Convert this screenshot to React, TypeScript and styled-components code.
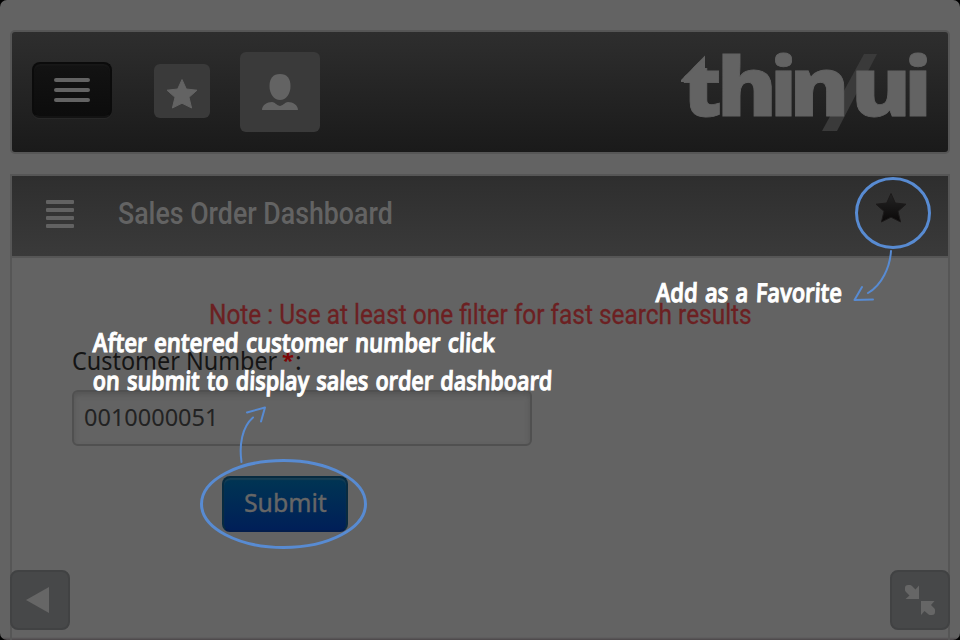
import React, { useLayoutEffect, useRef, useState } from 'react';
import styled, { createGlobalStyle } from 'styled-components';

const GlobalStyle = createGlobalStyle`
  * { box-sizing: border-box; }
  html, body { margin: 0; background: #000; overflow: hidden; }
`;

const Screen = styled.main`
  position: relative;
  display: flex;
  flex-direction: column;
  gap: 20px;
  width: 960px;
  height: 640px;
  padding: 30px 10px 0;
  overflow: hidden;
  border-radius: 7px;
  background: linear-gradient(#636363 0 637px, #4b4649 640px);
`;

const Toolbar = styled.header`
  display: flex;
  align-items: flex-start;
  flex: none;
  height: 124px;
  padding-left: 20px;
  border: 2px solid #565656;
  border-radius: 5px;
  background: linear-gradient(#2e2e2e, #1a1a1a);
`;

const MenuButton = styled.button`
  display: flex;
  flex-direction: column;
  align-items: center;
  justify-content: center;
  gap: 6px;
  width: 80px;
  height: 56px;
  margin: 30px 0 0;
  padding: 0;
  border: 2px solid #0b0b0b;
  border-bottom-color: #131313;
  border-radius: 8px;
  background: linear-gradient(#131313, #0c0c0c);
  box-shadow: inset 0 2px 1px #171717, 0 1px 1px #292929;
`;

const MenuBar = styled.span`
  width: 36px;
  height: 4px;
  border-radius: 2px;
  background: #636363;
`;

const Tile = styled.button<{ $w: number; $h: number; $top: number; $left: number }>`
  display: grid;
  place-items: center;
  width: ${p => p.$w}px;
  height: ${p => p.$h}px;
  margin: ${p => p.$top}px 0 0 ${p => p.$left}px;
  padding: 0;
  border: 0;
  border-radius: 6px;
  background: #3a3a3a;
`;

const Logo = styled.svg`
  width: 260px;
  height: 118px;
  margin: 0 12px 0 auto;
  overflow: visible;
  font-family: 'Open Sans', sans-serif;
  font-weight: 800;
  font-size: 81px;
  fill: #636363;
`;

const Panel = styled.section`
  display: flex;
  flex-direction: column;
  flex: 1;
  border: 2px solid #565656;
  border-bottom: 0;
`;

const PanelHeader = styled.div`
  display: flex;
  align-items: flex-start;
  flex: none;
  height: 82px;
  padding: 0 41px 0 34px;
  border-bottom: 2px solid #565656;
  background: linear-gradient(#2e2e2e, #3a3a3a);
`;

const ListLines = styled.span`
  display: flex;
  flex-direction: column;
  gap: 4px;
  width: 28px;
  margin: 24px 44px 0 0;
`;

const ListLine = styled.i`
  height: 4px;
  border-radius: 1px;
  background: #626262;
`;

const HeaderStar = styled.span`
  margin: 16px 0 0 auto;
`;

const PanelBody = styled.form`
  display: flex;
  flex-direction: column;
  align-items: flex-start;
  padding: 39px 60px 0;
`;

const Note = styled.div`
  margin-left: 137px;
  height: 38px;
`;

const Label = styled.label`
  display: flex;
  height: 40px;
  padding-top: 10px;
`;

const Required = styled.span`
  width: 17px;
  padding-left: 5px;
  font: 700 22px/28px 'Noto Sans', sans-serif;
  color: #7d0606;
`;

const Colon = styled.span`
  padding-left: 1px;
  font: 25px/30px 'Noto Sans', sans-serif;
  color: #141414;
`;

const Field = styled.div`
  display: flex;
  width: 460px;
  height: 56px;
  margin-top: 15px;
  padding: 7px 0 0 10px;
  border: 2px solid #505050;
  border-radius: 6px;
  box-shadow: inset 0 3px 5px #555;
`;

const SubmitButton = styled.button`
  display: flex;
  width: 126px;
  height: 56px;
  margin: 30px 0 0 150px;
  padding: 6px 0 0 20px;
  border: 2px solid #082b40;
  border-bottom-color: #031d4c;
  border-radius: 8px;
  background: linear-gradient(#003553, #001f58);
  box-shadow: inset 0 2px 1px #173f55;
`;

const CornerButton = styled.button<{ $side: 'left' | 'right' }>`
  position: absolute;
  top: 570px;
  ${p => p.$side}: 10px;
  width: 60px;
  height: 60px;
  padding: 0;
  border: 2px solid #414243;
  border-radius: 8px;
  background: #474849;
`;

const Overlay = styled.div`
  position: absolute;
  inset: 0;
  pointer-events: none;
`;

const Marks = styled.svg`
  position: absolute;
  inset: 0;
  width: 960px;
  height: 640px;
  fill: none;
  stroke: #588bd2;
  stroke-linecap: round;
  stroke-linejoin: round;
`;

const Hint = styled.div<{ $x: number; $y: number }>`
  position: absolute;
  left: ${p => p.$x}px;
  top: ${p => p.$y}px;
`;

type TextKind = 'title' | 'note' | 'label' | 'value' | 'submit' | 'hint';

const textStyles: Record<TextKind, string> = {
  title: "font: 500 32px/40px Roboto, sans-serif; color: #636363; padding-top: 17px;",
  note: "font: 28px/36px Roboto, sans-serif; color: #6c2022; -webkit-text-stroke: 0.3px #6c2022;",
  label: "font: 25px/30px 'Noto Sans', sans-serif; color: #141414;",
  value: "font: 23.5px/36px 'Noto Sans', sans-serif; color: #222;",
  submit: "font: 26px/36px 'Noto Sans', sans-serif; color: #666; -webkit-text-stroke: 0.4px #666;",
  hint: "font: 600 26px/38px 'Open Sans', sans-serif; word-spacing: 2px; color: #fff; -webkit-text-stroke: 1px #fff;",
};

const TextBox = styled.span<{ $kind: TextKind; $width: number }>`
  display: block;
  flex: none;
  width: ${p => p.$width}px;
  white-space: nowrap;
  ${p => textStyles[p.$kind]}
`;

const Glyphs = styled.span`
  display: inline-block;
  transform-origin: 0 50%;
`;

/* Condenses or widens a line so that it fills the given measure. */
function FitText({ kind, width, slant = 0, children }: { kind: TextKind; width: number; slant?: number; children: string }) {
  const ref = useRef<HTMLSpanElement>(null);
  const [scale, setScale] = useState(1);
  useLayoutEffect(() => {
    if (ref.current) setScale(width / ref.current.offsetWidth);
  }, [width, children]);
  return (
    <TextBox $kind={kind} $width={width}>
      <Glyphs ref={ref} style={{ transform: `scaleX(${scale}) skewX(${slant}deg)` }}>{children}</Glyphs>
    </TextBox>
  );
}

const STAR = 'M16 1.5 L20.3 11 L31 12.2 L23 19.3 L25.6 30 L16 25.2 L6.4 30 L9 19.3 L1 12.2 L11.7 11 Z';

function Star({ dark = false }: { dark?: boolean }) {
  return (
    <svg width="32" height="32" viewBox="0 0 32 32">
      <defs>
        <linearGradient id="starShade" x2="0" y2="1">
          <stop stopColor="#242424" />
          <stop offset="1" stopColor="#0a0808" />
        </linearGradient>
      </defs>
      <path d={STAR} fill={dark ? 'url(#starShade)' : '#636363'} stroke={dark ? '#1c1a1a' : '#636363'} strokeWidth="1" strokeLinejoin="round" />
    </svg>
  );
}

const LETTERS: { glyph: string; x: number; width: number }[] = [
  { glyph: 't', x: 682, width: 40 },
  { glyph: 'h', x: 717, width: 60 },
  { glyph: 'i', x: 770.5, width: 26 },
  { glyph: 'n', x: 789.5, width: 60 },
  { glyph: 'u', x: 851, width: 60 },
  { glyph: 'i', x: 904.5, width: 27 },
];

export default function App() {
  return (
    <>
      <GlobalStyle />
      <Screen>
        <Toolbar>
          <MenuButton aria-label="Menu"><MenuBar /><MenuBar /><MenuBar /></MenuButton>
          <Tile $w={56} $h={54} $top={32} $left={42} aria-label="Favorites">
            <svg width="32" height="38" viewBox="0 -6 32 38">
              <path d={STAR} fill="#636363" stroke="#636363" strokeWidth="1" strokeLinejoin="round" />
            </svg>
          </Tile>
          <Tile $w={80} $h={80} $top={20} $left={30} aria-label="Profile">
            <svg width="36" height="36" viewBox="0 0 36 36" fill="#636363">
              <path d="M18 0C25 0 28.500 4.500 28.500 12C28.500 20 24 26 18 26S7.500 20 7.500 12C7.500 4.500 11 0 18 0Z" />
              <path d="M0 36C0 31 5 28 10 28C13 28 14 31 18 32C22 31 23 28 26 28C31 28 36 31 36 36Z" />
            </svg>
          </Tile>
          <Logo viewBox="676 32 260 118" role="img" aria-label="thinyui">
            <clipPath id="slope"><path d="M681 80L705 56V68H723V120H681Z" /></clipPath>
            <path d="M864 54H877L837 131H822Z" fill="#3a3a3a" />
            <path d="M705 55.500V82H681V80Z" />
            {LETTERS.map(l => (
              <text key={l.x} x={l.x} y="115.500" textLength={l.width} lengthAdjust="spacingAndGlyphs" stroke="#636363" strokeWidth="0.8" clipPath={l.glyph === 't' ? 'url(#slope)' : undefined}>{l.glyph}</text>
            ))}
          </Logo>
        </Toolbar>
        <Panel>
          <PanelHeader>
            <ListLines><ListLine /><ListLine /><ListLine /><ListLine /></ListLines>
            <FitText kind="title" width={275}>Sales Order Dashboard</FitText>
            <HeaderStar><Star dark /></HeaderStar>
          </PanelHeader>
          <PanelBody>
            <Note><FitText kind="note" width={543}>Note : Use at least one filter for fast search results</FitText></Note>
            <Label>
              <FitText kind="label" width={205}>Customer Number</FitText>
              <Required>*</Required>
              <Colon>:</Colon>
            </Label>
            <Field><FitText kind="value" width={134}>0010000051</FitText></Field>
            <SubmitButton type="button"><FitText kind="submit" width={83}>Submit</FitText></SubmitButton>
          </PanelBody>
        </Panel>
        <CornerButton $side="left" aria-label="Back">
          <svg width="56" height="56" viewBox="12 572 56 56"><path d="M26 600L49 587V613Z" fill="#666" /></svg>
        </CornerButton>
        <CornerButton $side="right" aria-label="Collapse">
          <svg width="56" height="56" viewBox="892 572 56 56" fill="#666">
            <path d="M905 588Q905 585 908 585H910Q911 585 912 586L915.500 589.500L919 585.500V599H905.500L909.500 595.500L906 592Q905 591 905 590Z" />
            <path d="M921 601H934.500L931 605L934 608Q935 609 935 610V612Q935 615 932 615H930Q929 615 928 614L924.500 611L921 615Z" />
          </svg>
        </CornerButton>
        <Overlay>
          <Marks viewBox="0 0 960 640">
            <ellipse cx="893" cy="213" rx="36.500" ry="34.500" strokeWidth="3" />
            <path d="M891 251C890 267 882 285 868 293M862 287L854.500 300L873 299.500" strokeWidth="2" />
            <ellipse cx="283.500" cy="504" rx="82" ry="43.500" strokeWidth="3" />
            <path d="M241.500 462C239 445 242 427 253 417.500M247 412.500L265 407.500L261 421.500" strokeWidth="2" />
          </Marks>
          <Hint $x={656} $y={273}><FitText kind="hint" width={186} slant={-3}>Add as a Favorite</FitText></Hint>
          <Hint $x={93} $y={323}><FitText kind="hint" width={402} slant={-3}>After entered customer number click</FitText></Hint>
          <Hint $x={93} $y={361}><FitText kind="hint" width={459} slant={-3}>on submit to display sales order dashboard</FitText></Hint>
        </Overlay>
      </Screen>
    </>
  );
}
